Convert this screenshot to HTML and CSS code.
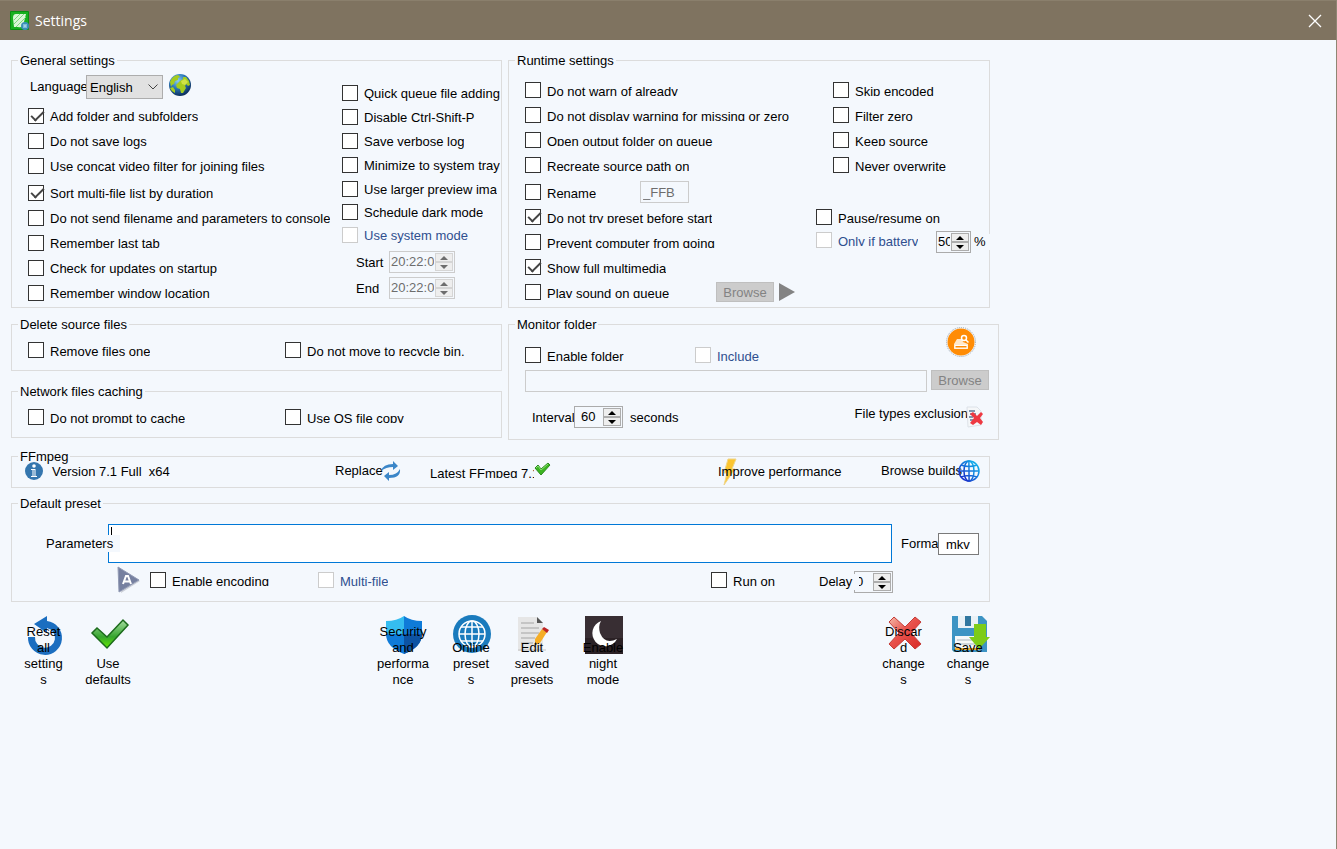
FILE: index.html
```html
<!DOCTYPE html>
<html lang="en">
<head>
    <meta charset="UTF-8">
    <meta name="viewport" content="width=device-width, initial-scale=1.0">
    <title>Settings</title>
    <link rel="stylesheet" href="styles.css">
</head>
<body>
    <header class="titlebar">
        <svg class="app-icon" viewBox="0 0 20 20" width="20" height="20">
            <rect width="19" height="19" rx="1" fill="#0a8f12"/>
            <rect x="1" y="1" width="17" height="17" fill="#17b01f"/>
            <path d="M3 7q0-4 3-4h10L13 15q-2 2-5 1H4z" fill="#d9f7d6"/>
            <path d="M4 9l6-6M4 13L14 3M6 16L16 6" stroke="#7fd680" stroke-width="1"/>
            <circle cx="15" cy="15" r="4" fill="#3b8fb8"/>
            <path d="M14 13v4M14 15h2M16 13v4" stroke="#bfe6f5" stroke-width="1"/>
        </svg>
        <h1 class="title">Settings</h1>
        <button class="close-btn" aria-label="Close">
            <svg viewBox="0 0 12 12" width="12" height="12"><path d="M0 0l12 12M12 0L0 12" stroke="#fff" stroke-width="1.3"/></svg>
        </button>
    </header>

    <main class="form">
        <div class="columns">
            <!-- General -->
            <fieldset>
                <legend>General settings</legend>
                <div class="general">
                    <div class="col general-left">
                        <div class="language">
                            <label class="language-label" for="language">Language</label>
                            <span class="select-wrap">
                                <select id="language"><option>English</option></select>
                                <svg class="chevron" viewBox="0 0 10 6" width="10" height="6"><path d="M0.5 0.5L5 5l4.500-4.500" fill="none" stroke="#444"/></svg>
                            </span>
                            <svg class="globe" viewBox="0 0 22 22" width="22" height="22">
                                <defs><radialGradient id="sea" cx=".4" cy=".3" r=".7"><stop offset="0" stop-color="#8fd0f0"/><stop offset=".5" stop-color="#2c78b8"/><stop offset="1" stop-color="#0c2f5c"/></radialGradient></defs>
                                <circle cx="11" cy="11" r="11" fill="url(#sea)"/>
                                <path d="M1 8q2-6 8-7l2 2-2 1 0 2-3 1-1 3-2 1-1 2zM11 7l3-2 0-2 3 0 3 4 1 4-2 1-2-2-1 2 1 2-3 5-2 0-1-4-3-1-1-3zM1 14l3-1 2 3 0 3q-4-2-5-5z" fill="#a5cc1f"/>
                                <path d="M12 7l4-2 3 3-3 3-3-1z" fill="#cfe346"/>
                            </svg>
                        </div>
                        <label class="check"><input type="checkbox" checked><span>Add folder and subfolders</span></label>
                        <label class="check"><input type="checkbox"><span>Do not save logs</span></label>
                        <label class="check"><input type="checkbox"><span>Use concat video filter for joining files</span></label>
                        <label class="check spaced"><input type="checkbox" checked><span>Sort multi-file list by duration</span></label>
                        <label class="check"><input type="checkbox"><span>Do not send filename and parameters to console</span></label>
                        <label class="check"><input type="checkbox"><span>Remember last tab</span></label>
                        <label class="check"><input type="checkbox"><span>Check for updates on startup</span></label>
                        <label class="check"><input type="checkbox"><span>Remember window location</span></label>
                    </div>
                    <div class="col general-right">
                        <label class="check"><input type="checkbox"><span>Quick queue file adding</span></label>
                        <label class="check"><input type="checkbox"><span>Disable Ctrl-Shift-P</span></label>
                        <label class="check"><input type="checkbox"><span>Save verbose log</span></label>
                        <label class="check"><input type="checkbox"><span>Minimize to system tray</span></label>
                        <label class="check tight"><input type="checkbox"><span>Use larger preview ima</span></label>
                        <label class="check tight"><input type="checkbox"><span>Schedule dark mode</span></label>
                        <label class="check tight"><input type="checkbox" disabled><span>Use system mode</span></label>
                        <div class="time-row">
                            <label for="start">Start</label>
                            <span class="spin time">
                                <input id="start" type="text" value="20:22:00" disabled>
                                <span class="spin-buttons"><button class="up" disabled aria-label="Up"></button><button class="down" disabled aria-label="Down"></button></span>
                            </span>
                        </div>
                        <div class="time-row">
                            <label for="end">End</label>
                            <span class="spin time">
                                <input id="end" type="text" value="20:22:00" disabled>
                                <span class="spin-buttons"><button class="up" disabled aria-label="Up"></button><button class="down" disabled aria-label="Down"></button></span>
                            </span>
                        </div>
                    </div>
                </div>
            </fieldset>

            <!-- Runtime -->
            <fieldset>
                <legend>Runtime settings</legend>
                <div class="runtime">
                    <div class="col runtime-left">
                        <label class="check cut"><input type="checkbox"><span>Do not warn of already</span></label>
                        <label class="check cut"><input type="checkbox"><span>Do not display warning for missing or zero</span></label>
                        <label class="check cut"><input type="checkbox"><span>Open output folder on queue</span></label>
                        <label class="check cut"><input type="checkbox"><span>Recreate source path on</span></label>
                        <div class="row spaced">
                            <label class="check cut rename"><input type="checkbox"><span>Rename</span></label>
                            <input class="text suffix" type="text" value="_FFB" aria-label="Rename suffix" disabled>
                        </div>
                        <label class="check cut"><input type="checkbox" checked><span>Do not try preset before start</span></label>
                        <label class="check cut"><input type="checkbox"><span>Prevent computer from going</span></label>
                        <label class="check cut"><input type="checkbox" checked><span>Show full multimedia</span></label>
                        <div class="row">
                            <label class="check cut sound"><input type="checkbox"><span>Play sound on queue</span></label>
                            <button class="browse" disabled>Browse</button>
                            <button class="icon-btn play" aria-label="Play">
                                <svg viewBox="0 0 16 18" width="16" height="18"><path d="M0 0l16 9-16 9z" fill="#838383"/></svg>
                            </button>
                        </div>
                    </div>
                    <div class="col runtime-right">
                        <label class="check cut inset"><input type="checkbox"><span>Skip encoded</span></label>
                        <label class="check cut inset"><input type="checkbox"><span>Filter zero</span></label>
                        <label class="check cut inset"><input type="checkbox"><span>Keep source</span></label>
                        <label class="check cut inset"><input type="checkbox"><span>Never overwrite</span></label>
                        <label class="check cut pause"><input type="checkbox"><span>Pause/resume on</span></label>
                        <div class="row battery">
                            <label class="check cut only"><input type="checkbox" disabled><span>Only if battery</span></label>
                            <span class="spin percent">
                                <input id="percent" type="text" value="50">
                                <span class="spin-buttons"><button class="up" aria-label="Up"></button><button class="down" aria-label="Down"></button></span>
                            </span>
                            <label class="unit" for="percent">%</label>
                        </div>
                    </div>
                </div>
            </fieldset>

            <div class="stack">
                <fieldset>
                    <legend>Delete source files</legend>
                    <div class="pair">
                        <label class="check cut"><input type="checkbox"><span>Remove files one</span></label>
                        <label class="check cut"><input type="checkbox"><span>Do not move to recycle bin.</span></label>
                    </div>
                </fieldset>
                <fieldset>
                    <legend>Network files caching</legend>
                    <div class="pair">
                        <label class="check cut"><input type="checkbox"><span>Do not prompt to cache</span></label>
                        <label class="check cut"><input type="checkbox"><span>Use OS file copy</span></label>
                    </div>
                </fieldset>
            </div>

            <!-- Monitor folder -->
            <fieldset class="monitor-box">
                <legend>Monitor folder</legend>
                <div class="monitor">
                    <div class="monitor-top">
                        <label class="check cut enable"><input type="checkbox"><span>Enable folder</span></label>
                        <label class="check cut"><input type="checkbox" disabled><span>Include</span></label>
                        <button class="icon-btn monitor-icon" aria-label="Monitor">
                            <svg viewBox="0 0 30 30" width="30" height="30">
                                <circle cx="15" cy="15" r="14.500" fill="none" stroke="#9aa4ae" stroke-dasharray="1 1"/>
                                <circle cx="15" cy="15" r="13.500" fill="#ff8c05"/>
                                <path d="M8 17l3-5h5l1 3 5 2v5H8z" fill="#ffe9cc"/>
                                <path d="M9 18.500h12v2.500H9z" fill="#ff8c05" stroke="#fff"/>
                                <circle cx="18" cy="11" r="2.500" fill="#ff8c05" stroke="#fff" stroke-width="1.500"/>
                                <path d="M20 13l2.500 2.500" stroke="#fff" stroke-width="1.500"/>
                            </svg>
                        </button>
                    </div>
                    <div class="monitor-path">
                        <input class="text" type="text" aria-label="Monitored folder" disabled>
                        <button class="browse" disabled>Browse</button>
                    </div>
                    <div class="monitor-bottom">
                        <label for="interval">Interval</label>
                        <span class="spin interval">
                            <input id="interval" type="text" value="60">
                            <span class="spin-buttons"><button class="up" aria-label="Up"></button><button class="down" aria-label="Down"></button></span>
                        </span>
                        <span class="seconds">seconds</span>
                        <button class="link-btn exclusion">
                            <span>File types exclusion</span>
                            <svg viewBox="0 0 20 22" width="20" height="22">
                                <path d="M3 1h10l4 4v14l-13 2z" fill="#f5f7f9" stroke="#dde2e8"/>
                                <path d="M5 5h6M6 8h6M5 11h4M6 14h3" stroke="#5b7894" stroke-width="1.500"/>
                                <path d="M6 8l3-2 4 4 4-4 2 2-3 4 3 4-2 3-4-3-4 3-3-2 4-5z" fill="#ee3942"/>
                            </svg>
                        </button>
                    </div>
                </div>
            </fieldset>
        </div>

        <!-- FFmpeg -->
        <fieldset class="ffmpeg-box">
            <legend>FFmpeg</legend>
            <div class="ffmpeg">
                <div class="version">
                    <svg viewBox="0 0 18 18" width="18" height="18">
                        <circle cx="9" cy="9" r="9" fill="#3576ae"/>
                        <circle cx="9" cy="4" r="1.800" fill="#fff"/>
                        <path d="M6 7h4.500v7H12v1H6v-1h1.500V8H6z" fill="#fff"/>
                        <path d="M8.500 8h1v6h-1z" fill="#3576ae"/>
                    </svg>
                    <span>Version 7.1 Full&nbsp; x64</span>
                </div>
                <button class="link-btn replace">
                    <span>Replace</span>
                    <svg viewBox="0 0 20 20" width="20" height="20">
                        <path d="M0 10Q2 3 12 3V0l5 5-5 4V6Q5 6 0 10z" fill="#3b86c8"/>
                        <path d="M19 8q1 9-11 9v3l-5-5 5-4v3q8 0 11-6z" fill="#3b86c8"/>
                    </svg>
                </button>
                <div class="latest">
                    <span>Latest FFmpeg 7.1</span>
                    <svg viewBox="0 0 17 14" width="17" height="14"><path d="M1 6l3-3 3 4 7-6 2 2-9 10z" fill="#3cb521" stroke="#2c8a1e"/><path d="M2 6l2-2 3 4 7-6" fill="none" stroke="#8ade74"/></svg>
                </div>
                <button class="link-btn improve">
                    <svg viewBox="0 0 14 28" width="14" height="28"><path d="M5 1h8L9 11h3L1 27l3-12H1z" fill="#fbc531" stroke="#f0d68a"/></svg>
                    <span>Improve performance</span>
                </button>
                <a class="builds" href="#builds">
                    <span>Browse builds</span>
                    <svg viewBox="0 0 22 22" width="22" height="22">
                        <defs><linearGradient id="net" x1="1" y1="0" x2="0" y2="1"><stop offset="0" stop-color="#12c4ef"/><stop offset="1" stop-color="#1a1ac4"/></linearGradient></defs>
                        <g fill="none" stroke="url(#net)" stroke-width="1.500"><circle cx="11" cy="11" r="10"/><ellipse cx="11" cy="11" rx="5" ry="10"/><path d="M3 5q8 3 16 0M3 17q8-3 16 0M1 10.900l20 .2M10.900 1l.2 20"/></g>
                    </svg>
                </a>
            </div>
        </fieldset>

        <!-- Default preset -->
        <fieldset class="preset-box">
            <legend>Default preset</legend>
            <div class="preset">
                <div class="parameters">
                    <label class="parameters-label" for="parameters">Parameters</label>
                    <div class="parameters-box">
                        <textarea id="parameters"></textarea>
                        <span class="caret"></span>
                    </div>
                    <label class="format-label" for="format">Format</label>
                    <input class="text format" id="format" type="text" value="mkv">
                </div>
                <div class="preset-options">
                    <svg class="auto" viewBox="0 0 22 26" width="22" height="26">
                        <path d="M2 2l20 12L3 26z" fill="#ccd0d8"/>
                        <path d="M0 0l21 13L1 25z" fill="#7680a0" stroke="#929bb5"/>
                        <path d="M5 17l3-8h2l3 8M6.500 14.500h5" fill="none" stroke="#fff" stroke-width="2"/>
                    </svg>
                    <label class="check cut encoding"><input type="checkbox"><span>Enable encoding</span></label>
                    <label class="check cut"><input type="checkbox" disabled><span>Multi-file</span></label>
                    <label class="check cut run"><input type="checkbox"><span>Run on</span></label>
                    <label class="delay-label" for="delay">Delay</label>
                    <span class="spin delay">
                        <input id="delay" type="text" value="0">
                        <span class="spin-buttons"><button class="up" aria-label="Up"></button><button class="down" aria-label="Down"></button></span>
                    </span>
                </div>
            </div>
        </fieldset>

        <!-- Bottom buttons -->
        <div class="toolbar">
            <div class="tools">
                <button class="tool">
                    <svg viewBox="0 0 38 40" width="38" height="40"><path d="M2 21a17 17 0 1 0 19-16V0L8 8l13 9v-5a10 10 0 1 1-12 9z" fill="#1b6ec0"/></svg>
                    <span>Reset<br>all<br>setting<br>s</span>
                </button>
                <button class="tool">
                    <svg viewBox="0 0 38 40" width="38" height="40">
                        <defs><linearGradient id="ok" x1="0" y1="0" x2="0" y2="1"><stop offset="0" stop-color="#a5dca0"/><stop offset=".6" stop-color="#37a52f"/><stop offset="1" stop-color="#62ea00"/></linearGradient></defs>
                        <path d="M1 17l5-5 10 9L32 4l5 5-21 23z" fill="url(#ok)" stroke="#1c6b1c" stroke-width="1.500"/>
                    </svg>
                    <span>Use<br>defaults</span>
                </button>
            </div>
            <div class="tools tools-middle">
                <button class="tool">
                    <svg viewBox="0 0 38 40" width="38" height="40">
                        <path d="M19 0q7 5 18 5v13q0 13-18 20z" fill="#0f7bd8"/>
                        <path d="M19 0Q12 5 1 5v13h18z" fill="#35bdf0"/>
                        <path d="M1 18h18v20Q1 31 1 18z" fill="#0f7bd8"/>
                        <path d="M19 18h18q0 13-18 20z" fill="#0d53a3"/>
                    </svg>
                    <span>Security<br>and<br>performa<br>nce</span>
                </button>
                <button class="tool">
                    <svg viewBox="0 0 38 40" width="38" height="40">
                        <circle cx="19" cy="18" r="19" fill="#1a7bbd"/>
                        <g fill="none" stroke="#fff" stroke-width="1.500"><circle cx="19" cy="18" r="13"/><ellipse cx="19" cy="18" rx="7" ry="13"/><path d="M6 18h26M19 5v26M8 11h22M8 25h22"/></g>
                    </svg>
                    <span>Online<br>preset<br>s</span>
                </button>
                <button class="tool">
                    <svg viewBox="0 0 30 40" width="30" height="40">
                        <path d="M0 1h19l6 6v28H0z" fill="#e6e6e6"/>
                        <path d="M19 1l6 6h-6z" fill="#555"/>
                        <path d="M3 7h13M3 12h18M3 17h18M3 22h14M3 27h12" stroke="#bbb" stroke-width="1.500"/>
                        <path d="M0 34h28" stroke="#c4c4c4"/>
                        <path d="M17 23l7-10 5 3-7 11-5 2z" fill="#f5ad26"/>
                        <path d="M24 13l2-2 5 3-2 3z" fill="#bd2525"/>
                        <path d="M17 29l0-3 2 2z" fill="#333"/>
                    </svg>
                    <span>Edit<br>saved<br>presets</span>
                </button>
                <button class="tool">
                    <svg viewBox="0 0 38 40" width="38" height="40">
                        <rect width="38" height="38" fill="#382e33"/>
                        <path d="M0 22h38v16H0z" fill="#2b2125"/>
                        <path d="M16 5a13 13 0 1 0 16 18Q20 29 15 17q-2-7 1-12z" fill="#fff"/>
                    </svg>
                    <span>Enable<br>night<br>mode</span>
                </button>
            </div>
            <div class="tools">
                <button class="tool">
                    <svg viewBox="0 0 34 40" width="34" height="40">
                        <defs><linearGradient id="no" x1="0" y1="0" x2="1" y2="1"><stop offset="0" stop-color="#f5b9a8"/><stop offset=".45" stop-color="#e8524c"/><stop offset="1" stop-color="#d82a26"/></linearGradient></defs>
                        <path d="M1 6l5-5 11 10L27 1l6 5-10 11 10 11-6 5-10-10L6 33l-5-5 10-11z" fill="url(#no)" stroke="#c53c38"/>
                    </svg>
                    <span>Discar<br>d<br>change<br>s</span>
                </button>
                <button class="tool">
                    <svg viewBox="0 0 38 40" width="38" height="40">
                        <path d="M1 0h30l5 5v31H3l-2-2z" fill="#3d94c4"/>
                        <path d="M7 0h20v12H7z" fill="#e9f1f6"/>
                        <path d="M14 0h6v10h-6z" fill="#31779f"/>
                        <path d="M4 20h24v12H4z" fill="#f6f8fa"/>
                        <path d="M6 24h16M6 28h18" stroke="#aab4bb"/>
                        <path d="M4 33h24" stroke="#f2b233" stroke-width="2"/>
                        <path d="M23 8h12v13h4L28 33 18 21h5z" fill="#7dcc19"/>
                    </svg>
                    <span>Save<br>change<br>s</span>
                </button>
            </div>
        </div>
    </main>
</body>
</html>
```
FILE: styles.css
```css
* {
    box-sizing: border-box;
}

body {
    margin: 0;
    min-height: 100vh;
    background-color: #f4f8fd;
    border-right: 1px solid #8f8673;
    color: #000;
    font-family: "Liberation Sans", Arial, sans-serif;
    font-size: 13px;
    line-height: 16px;
}

button, input, select, textarea {
    margin: 0;
    font: inherit;
    color: inherit;
}

button {
    padding: 0;
    border: none;
    background: none;
}

svg {
    display: block;
    flex: none;
    overflow: visible;
}

/* Title bar */
.titlebar {
    display: flex;
    align-items: center;
    height: 40px;
    padding: 0 15px 0 10px;
    border-top: 1px solid #8a7f6c;
    background-color: #7f7360;
    color: #fff;
}

.title {
    flex: 1;
    margin: 0 0 0 5px;
    font-family: "Open Sans", "Segoe UI", sans-serif;
    font-size: 14px;
    font-weight: normal;
}

/* Group boxes */
.form {
    max-width: 1001px;
    padding: 12px 11px;
}

.columns {
    display: grid;
    grid-template-columns: 491fr 482fr;
    gap: 8px 6px;
}

fieldset {
    min-width: 0;
    margin: 0;
    padding: 0 0 0 6px;
    border: 1px solid #dcdcdc;
}

legend {
    height: 16px;
    padding: 1px 2px 0;
}

.col {
    display: flex;
    flex-direction: column;
    align-items: flex-start;
    min-width: 0;
}

.row {
    display: flex;
    align-items: center;
    height: 20px;
}

/* Tick boxes */
.check {
    display: flex;
    align-items: center;
    gap: 6px;
    height: 20px;
    max-width: 100%;
    overflow: hidden;
    background-color: #f4f8fd;
    white-space: nowrap;
}

.check input {
    position: relative;
    flex: none;
    appearance: none;
    width: 16px;
    height: 16px;
    border: 1px solid #333;
    background-color: #fff;
}

.check input:checked::after {
    content: "";
    position: absolute;
    top: 2px;
    left: 2px;
    width: 11px;
    height: 5px;
    border: solid #444;
    border-width: 0 0 2px 2px;
    transform: rotate(-45deg);
}

.check input:disabled {
    border-color: #ccc;
}

.check input:disabled + span {
    color: #2f4f8f;
}

.check span {
    padding-top: 2px;
}

.cut span {
    height: 12px;
    padding-top: 0;
    overflow: hidden;
}

/* Text boxes */
.text {
    height: 22px;
    padding: 1px 2px 0;
    border: 1px solid #7a7a7a;
    background-color: #fff;
}

.text:disabled {
    border-color: #ccc;
    background-color: #f4f8fd;
    color: #6d6d6d;
}

.spin {
    display: flex;
    flex: none;
    height: 22px;
    padding: 1px 1px 1px 0;
    border: 1px solid #ababab;
    background-color: #f4f8fd;
}

.spin input {
    flex: 1;
    min-width: 0;
    padding: 0 1px;
    border: none;
    background: none;
}

.spin input:disabled {
    color: #6d6d6d;
}

.spin-buttons {
    display: flex;
    flex: none;
    flex-direction: column;
    width: 18px;
}

.spin-buttons button {
    display: flex;
    flex: 1;
    align-items: center;
    justify-content: center;
    border: 1px solid #adadad;
    background-color: #eee;
}

.up::after, .down::after {
    content: "";
    border: 4px solid transparent;
    border-top-width: 0;
    border-bottom-color: #000;
}

.down::after {
    border-top: 4px solid #000;
    border-bottom-width: 0;
}

.up:disabled::after {
    border-bottom-color: #6d6d6d;
}

.down:disabled::after {
    border-top-color: #6d6d6d;
}

.spin-buttons button:disabled {
    border-color: #d5d5d5;
}

.browse {
    width: 58px;
    height: 20px;
    padding-top: 1px;
    border: 1px solid #bfbfbf;
    background-color: #ccc;
    color: #838383;
}

.link-btn {
    display: flex;
    align-items: center;
}

/* General settings */
.general {
    display: grid;
    grid-template-columns: 314px 1fr;
    margin-right: -1px;
    padding: 0 0 4px 10px;
}

.general-left {
    gap: 5px;
    padding-top: 7px;
}

.general-left .check {
    max-width: none;
}

.spaced {
    margin-top: 2px;
}

.language {
    display: flex;
    align-items: center;
    height: 24px;
    margin: 0 0 2px 2px;
}

.language-label {
    width: 56px;
    overflow: hidden;
}

.select-wrap {
    position: relative;
    margin-right: 6px;
}

.select-wrap select {
    display: block;
    appearance: none;
    width: 77px;
    height: 24px;
    padding: 1px 3px 0;
    border: 1px solid #adadad;
    border-radius: 0;
    background-color: #e1e1e1;
}

.chevron {
    position: absolute;
    top: 9px;
    right: 5px;
    pointer-events: none;
}

.globe {
    margin-top: -4px;
}

.general-right {
    gap: 4px;
    padding-top: 15px;
}

.tight + .tight {
    margin-top: -1px;
}

.time-row {
    display: flex;
    align-items: center;
    margin-left: 14px;
}

.tight + .time-row {
    margin-top: 2px;
}

.time-row label {
    width: 33px;
    padding-top: 1px;
}

.time {
    width: 66px;
    border-color: #ccc;
}

/* Runtime settings */
.runtime {
    display: grid;
    grid-template-columns: 1fr 174px;
    margin-right: -1px;
    padding: 12px 0 4px 10px;
}

.runtime-left, .runtime-right {
    gap: 5px;
}

.rename {
    width: 115px;
}

.suffix {
    width: 49px;
}

.sound {
    width: 191px;
}

.play {
    margin-left: 5px;
}

.inset {
    margin-left: 17px;
}

.pause {
    margin-top: 27px;
}

.battery {
    align-self: stretch;
    margin-top: -2px;
}

.only {
    width: 120px;
}

.percent, .unit {
    margin-top: 4px;
}

.percent {
    width: 35px;
}

.unit {
    flex: 1;
    padding-left: 3px;
    background-color: #f4f8fd;
}

/* Delete and network */
.stack {
    display: flex;
    flex-direction: column;
    gap: 12px;
}

.pair {
    display: grid;
    grid-template-columns: 257px 1fr;
    padding: 8px 0 10px 10px;
}

/* Monitor folder */
.monitor-box {
    align-self: start;
    margin-right: -9px;
}

.monitor {
    padding: 0 9px 11px 10px;
}

.monitor-top {
    display: flex;
    align-items: flex-end;
    height: 38px;
    padding-bottom: 5px;
}

.enable {
    width: 170px;
}

.monitor-icon {
    align-self: flex-start;
    margin: -5px 13px 0 auto;
}

.monitor-path {
    display: flex;
    gap: 4px;
}

.monitor-path .text {
    flex: 1;
}

.monitor-bottom {
    display: flex;
    align-items: center;
    margin-top: 14px;
    padding-left: 7px;
}

.monitor-bottom label {
    width: 42px;
    padding-top: 2px;
}

.interval {
    width: 49px;
}

.interval input {
    padding-left: 6px;
}

.seconds {
    margin-left: 7px;
    padding-top: 2px;
}

.exclusion {
    margin: -6px 5px 0 auto;
}

.exclusion svg {
    margin: 6px 0 0 -4px;
}

/* FFmpeg */
.ffmpeg-box {
    margin-top: 8px;
}

.ffmpeg {
    display: grid;
    grid-template-columns: 310px 95px 288px 163px 1fr;
    align-items: center;
    height: 23px;
    padding: 0 0 9px 7px;
}

.version, .builds, .latest {
    display: flex;
    align-items: center;
}

.ffmpeg > * {
    height: 14px;
}

.version {
    gap: 9px;
}

.version span {
    padding-top: 2px;
}

.replace svg {
    margin-left: -2px;
}

.latest span {
    width: 104px;
    height: 12px;
    margin-top: 2px;
    overflow: hidden;
    white-space: nowrap;
}

.latest svg {
    margin-top: -4px;
}

.improve {
    display: grid;
    align-items: center;
    justify-content: start;
}

.improve svg, .improve span {
    grid-area: 1 / 1;
}

.improve svg {
    margin: -7px 0 -7px 5px;
}

.builds {
    color: #000;
    text-decoration: none;
}

.builds svg {
    margin-left: -4px;
}

/* Default preset */
.preset-box {
    margin-top: 7px;
}

.preset {
    padding: 13px 10px 11px 28px;
}

.parameters {
    display: flex;
    align-items: center;
}

.parameters-label {
    position: relative;
    z-index: 1;
    width: 74px;
    margin-right: -12px;
    background-color: #f4f8fd;
}

.parameters-box {
    position: relative;
    flex: 1;
}

textarea {
    display: block;
    width: 100%;
    height: 39px;
    padding: 0 2px;
    border: 1px solid #0078d7;
    border-radius: 0;
    outline: none;
    background-color: #fff;
    resize: none;
}

.caret {
    position: absolute;
    top: 3px;
    left: 3px;
    width: 1px;
    height: 12px;
    background-color: #000;
}

.format-label {
    width: 37px;
    margin-left: 9px;
    overflow: hidden;
}

.parameters-label, .format-label {
    padding-top: 1px;
}

.format {
    width: 41px;
    padding: 1px 7px 0;
}

.preset-options {
    display: flex;
    align-items: center;
    height: 20px;
    margin-top: 7px;
    padding: 0 86px 0 72px;
}

.encoding {
    width: 168px;
    margin-left: 10px;
}

.run {
    margin-left: auto;
}

.delay-label {
    position: relative;
    width: 40px;
    margin: 4px -5px 0 44px;
    background-color: #f4f8fd;
}

.delay {
    width: 39px;
    margin-top: 4px;
}

/* Bottom buttons */
.toolbar {
    display: grid;
    grid-template-columns: 358px 1fr 128px;
    margin: 14px -9px 0 0;
}

.tools {
    display: grid;
    grid-template-columns: 65px 64px;
}

.tools-middle {
    grid-template-columns: 68px 68px 54px 88px;
}

.tool {
    display: grid;
    justify-items: center;
    height: 72px;
}

.tool svg, .tool span {
    grid-area: 1 / 1;
}

.tool svg {
    margin-left: 3px;
}

.tools-middle svg {
    margin-left: 1px;
}

.tool span {
    align-self: end;
}
```
